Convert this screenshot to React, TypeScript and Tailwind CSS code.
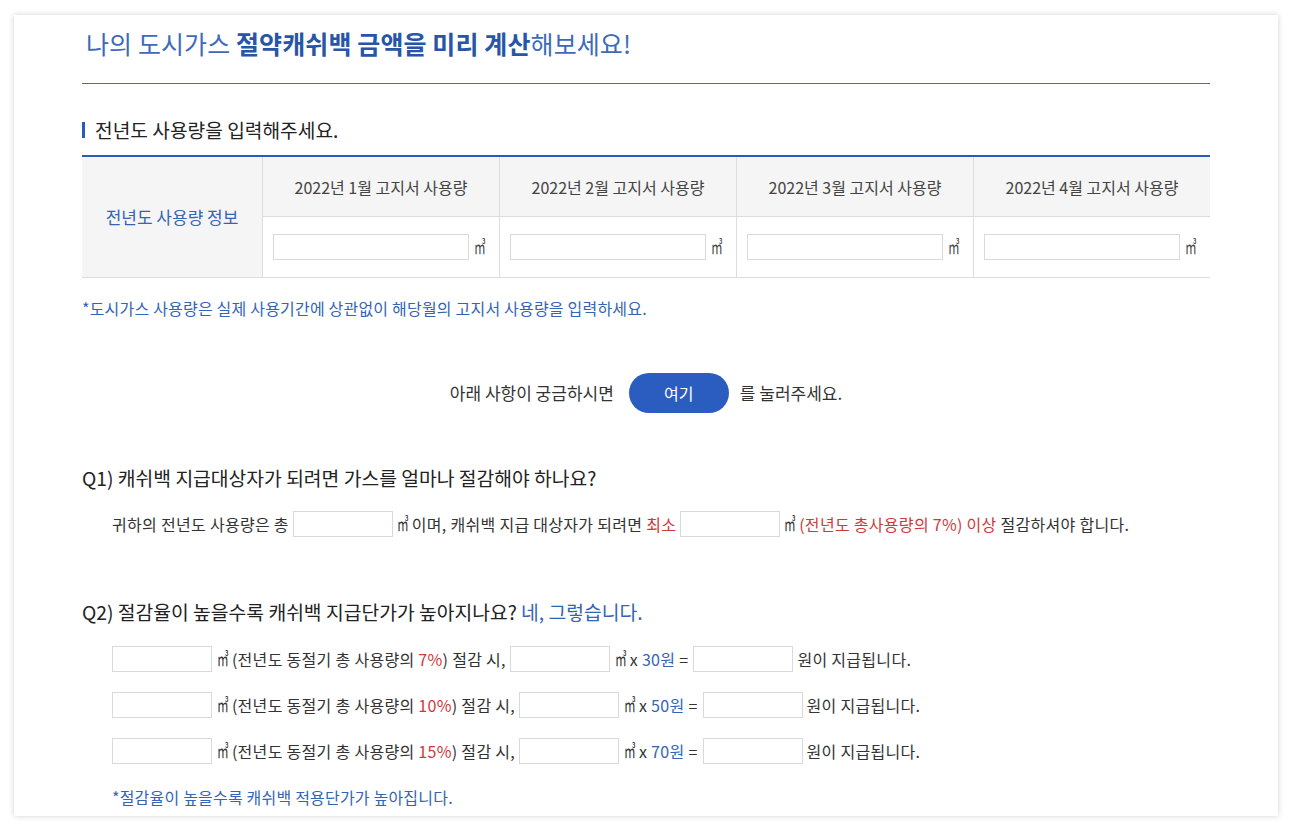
import React from "react";

const FONT = { fontFamily: '"Noto Sans CJK KR", "Noto Sans", sans-serif' };

function Box({ w = "w-[100px]" }: { w?: string }) {
  return (
    <input
      type="text"
      className={`${w} h-[26px] border border-[#d9d9d9] bg-white align-middle outline-none`}
    />
  );
}

function M3() {
  return <span className="inline-block w-[11px] text-[18px] leading-[18px] scale-x-[0.65] origin-left">㎥</span>;
}

function Q2Row({ pct, price }: { pct: string; price: string }) {
  return (
    <div className="flex items-center h-[26px] text-[16px] tracking-[0.3px] text-[#333] whitespace-pre">
      <Box />
      <span className="ml-[5px]"><M3 /> (전년도 동절기 총 사용량의 </span>
      <span className="text-[#d0393b]">{pct}</span>
      <span>) 절감 시,</span>
      <span className="ml-[4px]"></span>
      <Box />
      <span className="ml-[5px]"><M3 /> x </span>
      <span className="text-[#3464b4]">{price}</span>
      <span> =</span>
      <span className="ml-[5px]"></span>
      <Box />
      <span className="ml-[4px]">원이 지급됩니다.</span>
    </div>
  );
}

export default function App() {
  const months = ["1", "2", "3", "4"];
  return (
    <div className="min-h-screen bg-white pl-[14px] pt-[15px]" style={FONT}>
      <div className="w-[1264px] h-[801px] bg-white shadow-[0_0_6px_rgba(0,0,0,0.18)] px-[68px]">
        <h1 className="pt-[14px] pl-[4px] text-[25px] leading-[28px] tracking-[0.1px] text-[#3d6bb8] font-normal">
          나의 도시가스 <span className="font-bold text-[#2756a8]">절약캐쉬백 금액을 미리 계산</span>해보세요!
        </h1>
        <div className="mt-[26px] h-px bg-[#4a6ea8]" />

        <div className="mt-[34px] flex items-center h-[24px]">
          <div className="w-[3px] h-[16px] bg-[#2a5bb8]" />
          <div className="ml-[10px] text-[19.2px] leading-[24px] text-[#222]">전년도 사용량을 입력해주세요.</div>
        </div>

        <div className="mt-[13px] flex border-t-2 border-[#2a5bb8] border-b border-b-[#dddddd]">
          <div className="w-[180px] bg-[#f5f5f5] flex items-center justify-center text-[17px] text-[#3464b4]">
            전년도 사용량 정보
          </div>
          {months.map((m) => (
            <div key={m} className="w-[237px] border-l border-[#dddddd]">
              <div className="h-[60px] bg-[#f5f5f5] border-b border-[#dddddd] flex items-center justify-center text-[16px] text-[#444]">
                2022년 {m}월 고지서 사용량
              </div>
              <div className="h-[60px] flex items-center pl-[10px]">
                <Box w="w-[196px]" />
                <span className="ml-[5px] text-[16px] text-[#444]"><M3 /></span>
              </div>
            </div>
          ))}
        </div>

        <p className="mt-[19px] text-[16px] leading-[22px] tracking-[0.2px] text-[#3464b4]">
          *도시가스 사용량은 실제 사용기간에 상관없이 해당월의 고지서 사용량을 입력하세요.
        </p>

        <div className="mt-[54px] flex items-center justify-center text-[17px] text-[#333]">
          <span>아래 사항이 궁금하시면</span>
          <button className="ml-[15px] mr-[11px] w-[100px] h-[40px] rounded-full bg-[#2a5dbf] text-white text-[16px]">
            여기
          </button>
          <span>를 눌러주세요.</span>
        </div>

        <h2 className="mt-[52px] text-[19.3px] leading-[26px] text-[#222]">
          Q1) 캐쉬백 지급대상자가 되려면 가스를 얼마나 절감해야 하나요?
        </h2>
        <div className="mt-[20px] pl-[30px] flex items-center h-[26px] text-[16px] tracking-[0.3px] text-[#333] whitespace-pre">
          <span>귀하의 전년도 사용량은 총</span>
          <span className="ml-[4px]"></span>
          <Box />
          <span className="ml-[4px]"><M3 /> 이며, 캐쉬백 지급 대상자가 되려면 </span>
          <span className="text-[#d0393b]">최소</span>
          <span className="ml-[4px]"></span>
          <Box />
          <span className="ml-[4px]"><M3 /> </span>
          <span className="text-[#d0393b]">(전년도 총사용량의 7%) 이상</span>
          <span> 절감하셔야 합니다.</span>
        </div>

        <h2 className="mt-[62px] text-[19.3px] leading-[26px] text-[#222]">
          Q2) 절감율이 높을수록 캐쉬백 지급단가가 높아지나요? <span className="text-[#3464b4]">네, 그렇습니다.</span>
        </h2>
        <div className="mt-[21px] pl-[30px] flex flex-col gap-[20px]">
          <Q2Row pct="7%" price="30원" />
          <Q2Row pct="10%" price="50원" />
          <Q2Row pct="15%" price="70원" />
        </div>
        <p className="mt-[22px] pl-[30px] text-[16px] leading-[22px] tracking-[0.2px] text-[#3464b4]">
          *절감율이 높을수록 캐쉬백 적용단가가 높아집니다.
        </p>
      </div>
    </div>
  );
}
